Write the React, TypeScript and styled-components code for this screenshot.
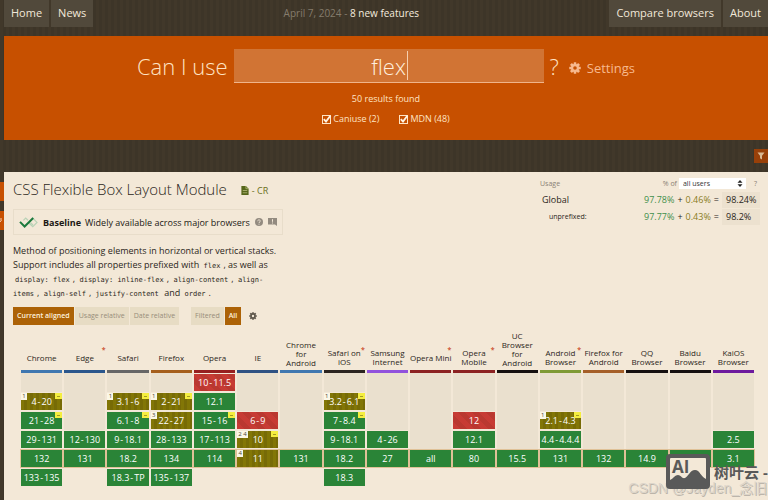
import React from "react";
import styled, { createGlobalStyle, css } from "styled-components";

const GlobalStyle = createGlobalStyle`
  *, *::before, *::after { box-sizing: border-box; }
  html { background: #40372a; }
  body {
    margin: 0;
    font-family: "Open Sans", "Noto Sans", sans-serif;
    color: #2b2620;
  }
  button, input, select { font-family: inherit; margin: 0; border: 0; border-radius: 0; }
`;

const Page = styled.div`
  position: relative;
  display: flex;
  flex-direction: column;
  min-height: 100vh;
  padding-left: 4px;
  overflow: hidden;
  background: repeating-linear-gradient(90deg, #41382a 0 3px, #3d3528 3px 6px);
`;

/* ---------- top navigation ---------- */

const TopBar = styled.header`
  display: flex;
  justify-content: space-between;
  align-items: flex-start;
  height: 36px;
`;

const NavGroup = styled.nav`
  display: flex;
  gap: 2px;
`;

const NavLink = styled.a`
  padding: 0 7px;
  height: 27px;
  line-height: 26px;
  font-size: 11px;
  color: #f1e8da;
  background: #51493b;
  text-decoration: none;
  white-space: nowrap;
`;

const NewsLine = styled.p`
  margin: 0;
  line-height: 26px;
  font-size: 10px;
  color: #857c6c;
  white-space: nowrap;
`;

const NewsLink = styled.a`
  color: #f5ecde;
  text-decoration: none;
`;

/* ---------- search ---------- */

const SearchPanel = styled.form`
  display: flex;
  flex-direction: column;
  align-items: center;
  height: 104px;
  padding-top: 13px;
  background: #c75000;
  color: #ffe4c4;
`;

const SearchRow = styled.div`
  display: flex;
  align-items: center;
  height: 34px;
`;

const SearchLabel = styled.label`
  font-size: 22px;
  font-weight: 300;
  line-height: 34px;
  margin-right: 6px;
  white-space: nowrap;
`;

const SearchField = styled.div`
  position: relative;
  width: 310px;
  height: 34px;
`;

const SearchInput = styled.input`
  width: 100%;
  height: 34px;
  padding: 0;
  background: #d17434;
  border-bottom: 1px solid #f0b48a;
  color: #fff0de;
  font-size: 22px;
  font-weight: 300;
  text-align: center;
  outline: none;
  caret-color: transparent;
`;

const Caret = styled.span`
  position: absolute;
  top: 2px;
  left: calc(50% + 18px);
  width: 1px;
  height: 29px;
  background: #f6cfae;
`;

const QuestionMark = styled.span`
  margin: 0 10px 0 6px;
  font-size: 22px;
  font-weight: 300;
  line-height: 34px;
`;

const SettingsButton = styled.button`
  display: flex;
  align-items: center;
  gap: 6px;
  padding: 4px 0 0;
  background: none;
  color: #f7b98e;
  font-size: 13px;
  line-height: 20px;
`;

const ResultCount = styled.p`
  margin: 9px 0 0;
  font-size: 9px;
  line-height: 14px;
`;

const FilterRow = styled.div`
  display: flex;
  gap: 20px;
  margin-top: 6px;
`;

const CheckLabel = styled.label`
  display: flex;
  align-items: center;
  gap: 2px;
  font-size: 9px;
  line-height: 14px;
`;

const CheckBox = styled.span`
  position: relative;
  display: block;
  width: 9px;
  height: 9px;
  input {
    display: block;
    appearance: none;
    width: 9px;
    height: 9px;
    border: 1px solid #ffe4c4;
  }
  svg {
    position: absolute;
    inset: 0;
    overflow: visible;
    pointer-events: none;
  }
`;

/* ---------- strip between search and card ---------- */

const Strip = styled.div`
  display: flex;
  justify-content: flex-end;
  height: 32px;
  padding-top: 9px;
`;

const FilterButton = styled.button`
  display: flex;
  align-items: center;
  justify-content: center;
  width: 14px;
  height: 14px;
  padding: 0;
  background: #984009;
`;

/* ---------- feature card ---------- */

const Card = styled.main`
  position: relative;
  flex: 1;
  padding: 6px 8px 0 9px;
  background: #f3e8d7;
`;

const SideTabs = styled.div`
  position: absolute;
  top: 10px;
  left: -4px;
  display: grid;
  gap: 10px;
`;

const SideTab = styled.button`
  display: flex;
  align-items: center;
  width: 4px;
  height: 19px;
  padding: 0;
  background: #c75000;
`;

const CardHead = styled.div`
  display: flex;
  justify-content: space-between;
  align-items: flex-start;
`;

const Summary = styled.section`
  width: 272px;
`;

const TitleRow = styled.div`
  display: flex;
  align-items: center;
  height: 22px;
  white-space: nowrap;
`;

const Title = styled.h1`
  margin: 0 14px 0 0;
  font-size: 15px;
  font-weight: 300;
  line-height: 22px;
`;

const StatusLink = styled.a`
  display: flex;
  align-items: center;
  gap: 3px;
  padding-top: 2px;
  color: #6b7020;
  font-size: 9px;
  text-decoration: none;
`;

const Baseline = styled.div`
  display: inline-flex;
  align-items: center;
  height: 26px;
  margin-top: 9px;
  padding: 0 5px;
  border: 1px solid #e8ddca;
  font-size: 9px;
  color: #1b1814;
  white-space: nowrap;
  b { margin: 0 4px 0 5px; }
`;

const HintButton = styled.button`
  display: flex;
  margin-left: 5px;
  padding: 0;
  background: none;
  color: #938b80;
`;

const Description = styled.p`
  margin: 9px 0 0;
  font-size: 9px;
  line-height: 14px;
`;

const Code = styled.code`
  padding: 0 3px 0 2px;
  font-family: "DejaVu Sans Mono", "Liberation Mono", monospace;
  font-size: 7px;
  line-height: 7px;
`;

/* ---------- usage ---------- */

const Usage = styled.table`
  width: 220px;
  border-collapse: collapse;
  font-size: 9px;
  line-height: 11px;
  white-space: nowrap;
  th, td { padding: 0; font-weight: 400; text-align: left; }
`;

const UsageLabel = styled.th<{ $size: "head" | "main" | "sub" }>`
  && {
    font-size: ${(p) => (p.$size === "main" ? 9 : 7)}px;
    padding-left: ${(p) => (p.$size === "head" ? 0 : p.$size === "main" ? 2 : 9)}px;
    color: ${(p) => (p.$size === "head" ? "#8a8174" : "#2b2620")};
  }
`;

const UsageRow = styled.tr`
  height: 17px;
  &:first-child { height: 13px; vertical-align: top; }
`;

const UsageTools = styled.div`
  display: flex;
  align-items: center;
  justify-content: flex-end;
  gap: 2px;
  padding-right: 3px;
  font-size: 7px;
  color: #8a8174;
`;

const SelectBox = styled.span`
  position: relative;
  display: flex;
  width: 67px;
  margin-right: 6px;
  select {
    width: 100%;
    height: 11px;
    padding: 0 4px;
    appearance: none;
    background: #fff;
    color: #333;
    font-size: 7px;
    line-height: 11px;
  }
  svg { position: absolute; right: 3px; top: 2px; pointer-events: none; }
`;

const Figures = styled.div`
  display: flex;
  align-items: center;
  justify-content: flex-end;
  gap: 3px;
`;

const Share = styled.span<{ $tone: "full" | "partial" }>`
  color: ${(p) => (p.$tone === "full" ? "#3f8f4c" : "#8a7c1c")};
`;

const Total = styled.span`
  width: 38px;
  padding: 0 4px;
  line-height: 16px;
  background: #ece1cf;
  color: #2b2620;
`;

/* ---------- view switches ---------- */

const Switches = styled.div`
  display: flex;
  align-items: center;
  margin-top: 7px;
`;

const SwitchGroup = styled.div`
  display: flex;
  gap: 1px;
  margin-right: 12px;
`;

const SwitchButton = styled.button<{ $active?: boolean }>`
  height: 18px;
  padding: 0 4px;
  font-size: 7px;
  line-height: 18px;
  white-space: nowrap;
  ${(p) =>
    p.$active
      ? css`background: #ac6206; color: #fff3df; font-weight: 600;`
      : css`background: #e7dcc4; color: #978d7a;`}
`;

const GearButton = styled.button`
  display: flex;
  padding: 0;
  margin-left: -4px;
  background: none;
  color: #5d564b;
`;

/* ---------- support table ---------- */

const Support = styled.table`
  width: calc(100% - 12px);
  margin: 6px 5px 0 7px;
  table-layout: fixed;
  border-collapse: separate;
  border-spacing: 0;
  font-size: 9px;
  text-align: center;
  th, td { padding: 0; font-weight: 400; }
  th { vertical-align: bottom; font-size: 8px; }
`;

const BrowserName = styled.div<{ $bar: string }>`
  position: relative;
  display: flex;
  align-items: center;
  justify-content: center;
  min-height: 26px;
  margin: 0 1px;
  padding-bottom: 3px;
  border-bottom: 3px solid ${(p) => p.$bar};
  line-height: 9px;
`;

const Star = styled.sup`
  position: absolute;
  top: -2px;
  right: 0;
  color: #cf5b3b;
  font-size: 7px;
  font-weight: 700;
  line-height: 9px;
`;

type Kind = "y" | "a" | "n";

const fills: Record<Kind, string> = {
  y: "#2a8437",
  a: "repeating-linear-gradient(90deg, #827606 0 3px, #776b06 3px 6px)",
  n: "repeating-linear-gradient(45deg, #c73b34 0 5px, #ba3830 5px 10px)",
};

const Row = styled.tr<{ $current?: boolean }>`
  td { background: ${(p) => (p.$current ? "#dfc197" : "transparent")}; }
`;

const Version = styled.div<{ $kind: Kind }>`
  position: relative;
  height: 17px;
  margin: 1px;
  background: ${(p) => fills[p.$kind]};
  color: #fff;
  line-height: 17px;
  white-space: nowrap;
`;

const Dash = styled.span`
  margin: 0 1px;
`;

const Empty = styled.div<{ $blank?: boolean }>`
  height: 19px;
  margin: 0 1px;
  background: ${(p) => (p.$blank ? "transparent" : "#eae0ce")};
`;

const NoteTag = styled.span`
  position: absolute;
  top: 0;
  left: 0;
  min-width: 6px;
  height: 7px;
  padding: 0 1px;
  background: #fbf7e6;
  color: #4b4636;
  font-size: 6px;
  line-height: 7px;
`;

const PrefixTag = styled.span`
  position: absolute;
  top: 0;
  right: 0;
  display: flex;
  align-items: center;
  justify-content: center;
  width: 7px;
  height: 6px;
  background: #f4ee3f;
  &::after { content: ""; width: 3px; height: 1px; background: #a39a25; }
`;

/* ---------- watermark ---------- */

const Watermark = styled.div`
  position: absolute;
  right: 0;
  bottom: 0;
  width: 139px;
  height: 48px;
  pointer-events: none;
  font-family: "Open Sans", "Noto Sans CJK SC", sans-serif;
`;

const Signature = styled.span`
  position: absolute;
  right: 1px;
  bottom: 2px;
  color: #dcd5ca;
  font-family: "Liberation Sans", "Noto Sans CJK SC", sans-serif;
  font-size: 14px;
  line-height: 20px;
  text-shadow: 1px 1px 0 #bcb5aa;
  white-space: nowrap;
`;

const Stamp = styled.div`
  position: absolute;
  left: 37px;
  top: 2px;
  display: flex;
  align-items: center;
  gap: 4px;
  color: #595959;
  font-size: 15px;
  font-weight: 700;
  line-height: 20px;
  white-space: nowrap;
`;

/* ---------- icons ---------- */

const Gear = ({ size, hole }: { size: number; hole: string }) => (
  <svg width={size} height={size} viewBox="-12 -12 24 24" aria-hidden="true">
    {[0, 45, 90, 135].map((a) => (
      <rect key={a} x="-2.6" y="-11.5" width="5.2" height="23" rx="0.8" fill="currentColor" transform={`rotate(${a})`} />
    ))}
    <circle r="8" fill="currentColor" />
    <circle r="3.6" fill={hole} />
  </svg>
);

const Check = () => (
  <svg width="9" height="9" viewBox="0 0 9 9" aria-hidden="true">
    <path d="M1.8 4.2 4 6.6 8.4 0.8" fill="none" stroke="#fff3e2" strokeWidth="1.9" />
  </svg>
);

const BaselineIcon = () => (
  <svg width="19" height="11" viewBox="0 0 19 11" aria-hidden="true">
    <path d="M4.4 3.4 6.7 1 9 3.2 M11.5 5.6 14 8 M12 2.8 13.8 1 18 5.4 13.8 9.7 9.6 5.7" fill="none" stroke="#b9d2b6" strokeWidth="1.2" />
    <path d="M1 4.9 5.6 9.5 14.2 1" fill="none" stroke="#1d7a3d" strokeWidth="2" />
  </svg>
);

/* ---------- data ---------- */

const browsers: { name: string; bar: string; star?: boolean }[] = [
  { name: "Chrome", bar: "#3f77b0" },
  { name: "Edge", bar: "#2a568c", star: true },
  { name: "Safari", bar: "#666666" },
  { name: "Firefox", bar: "#a55f1c" },
  { name: "Opera", bar: "#961f1f" },
  { name: "IE", bar: "#2f5283" },
  { name: "Chrome for Android", bar: "#3f77b0" },
  { name: "Safari on iOS", bar: "#2b2420", star: true },
  { name: "Samsung Internet", bar: "#9152dc" },
  { name: "Opera\u00a0Mini", bar: "#8c2222", star: true },
  { name: "Opera Mobile", bar: "#8c2222", star: true },
  { name: "UC Browser for Android", bar: "#151010" },
  { name: "Android Browser", bar: "#7f9a35", star: true },
  { name: "Firefox\u00a0for Android", bar: "#a55f28" },
  { name: "QQ Browser", bar: "#151010" },
  { name: "Baidu Browser", bar: "#151010" },
  { name: "KaiOS Browser", bar: "#6d1a9e" },
];

type Cell = { v: string; kind?: Kind; note?: string; prefix?: boolean } | null;
const y = (v: string, prefix = false): Cell => ({ v, kind: "y", prefix });
const a = (v: string, note: string, prefix = false): Cell => ({ v, kind: "a", note, prefix });
const n = (v: string): Cell => ({ v, kind: "n" });
const _ = null;

const rows: Cell[][] = [
  [_, _, _, _, n("10-11.5"), _, _, _, _, _, _, _, _, _, _, _, _],
  [a("4-20", "1", true), _, a("3.1-6", "1", true), a("2-21", "1", true), y("12.1"), _, _, a("3.2-6.1", "1", true), _, _, _, _, _, _, _, _, _],
  [y("21-28", true), _, y("6.1-8", true), a("22-27", "3"), y("15-16", true), n("6-9"), _, y("7-8.4", true), _, _, n("12"), _, a("2.1-4.3", "1", true), _, _, _, _],
  [y("29-131"), y("12-130"), y("9-18.1"), y("28-133"), y("17-113"), a("10", "2 4", true), _, y("9-18.1"), y("4-26"), _, y("12.1"), _, y("4.4-4.4.4"), _, _, _, y("2.5")],
  [y("132"), y("131"), y("18.2"), y("134"), y("114"), a("11", "4"), y("131"), y("18.2"), y("27"), y("all"), y("80"), y("15.5"), y("131"), y("132"), y("14.9"), y("13.52"), y("3.1")],
  [y("133-135"), _, y("18.3-TP"), y("135-137"), _, _, _, y("18.3"), _, _, _, _, _, _, _, _, _],
];
const CURRENT = 4;

const Range = ({ value }: { value: string }) => {
  const [from, to] = value.split("-");
  return to ? <>{from}<Dash>-</Dash>{to}</> : <>{from}</>;
};

export default function App() {
  return (
    <Page>
      <GlobalStyle />
      <TopBar>
        <NavGroup>
          <NavLink href="#home">Home</NavLink>
          <NavLink href="#news">News</NavLink>
        </NavGroup>
        <NewsLine>
          April 7, 2024 - <NewsLink href="#new">8 new features</NewsLink>
        </NewsLine>
        <NavGroup>
          <NavLink href="#compare">Compare browsers</NavLink>
          <NavLink href="#about">About</NavLink>
        </NavGroup>
      </TopBar>

      <SearchPanel onSubmit={(e) => e.preventDefault()}>
        <SearchRow>
          <SearchLabel htmlFor="search">Can I use</SearchLabel>
          <SearchField>
            <SearchInput id="search" type="text" defaultValue="flex" autoComplete="off" />
            <Caret />
          </SearchField>
          <QuestionMark>?</QuestionMark>
          <SettingsButton type="button">
            <Gear size={12} hole="#c75000" />
            Settings
          </SettingsButton>
        </SearchRow>
        <ResultCount>50 results found</ResultCount>
        <FilterRow>
          <CheckLabel>
            <CheckBox><input type="checkbox" defaultChecked /><Check /></CheckBox>
            Caniuse (2)
          </CheckLabel>
          <CheckLabel>
            <CheckBox><input type="checkbox" defaultChecked /><Check /></CheckBox>
            MDN (48)
          </CheckLabel>
        </FilterRow>
      </SearchPanel>

      <Strip>
        <FilterButton aria-label="Filter">
          <svg width="8" height="8" viewBox="0 0 8 8" aria-hidden="true">
            <path d="M0.5 0.5h7L5 3.8V7.5L3 6.3V3.8Z" fill="#d9b892" />
          </svg>
        </FilterButton>
      </Strip>

      <Card>
        <SideTabs>
          <SideTab aria-label="Previous panel" />
          <SideTab aria-label="Next panel">
            <svg width="3" height="5" viewBox="0 0 3 5" aria-hidden="true">
              <path d="M0 1h2M0 4 1.5 2" stroke="#f6cfae" fill="none" />
            </svg>
          </SideTab>
        </SideTabs>

        <CardHead>
          <Summary>
            <TitleRow>
              <Title>CSS Flexible Box Layout Module</Title>
              <StatusLink href="#spec">
                <svg width="8" height="9" viewBox="0 0 8 10" aria-hidden="true">
                  <path d="M0 0h5l3 3v7H0Z" fill="#55661a" />
                  <path d="M5 0v3h3M1.5 5h5M1.5 7.5h5" fill="none" stroke="#b3b878" strokeWidth="0.9" />
                </svg>
                - CR
              </StatusLink>
            </TitleRow>
            <Baseline>
              <BaselineIcon />
              <b>Baseline</b>
              Widely available across major browsers
              <HintButton aria-label="About Baseline">
                <svg width="8" height="8" viewBox="0 0 8 8" aria-hidden="true">
                  <circle cx="4" cy="4" r="4" fill="currentColor" />
                  <path d="M2.7 3.2C2.7 1.4 5.4 1.5 5.3 3.1 5.2 3.9 4 3.9 4 5M4 5.7v1" fill="none" stroke="#f3e8d7" strokeWidth="0.9" />
                </svg>
              </HintButton>
              <HintButton aria-label="Feedback">
                <svg width="9" height="8" viewBox="0 0 9 8" aria-hidden="true">
                  <path d="M0 0h9v8L7 6.5H0Z" fill="currentColor" />
                  <path d="M4.5 1.2v2.6M4.5 4.5v1" stroke="#f3e8d7" strokeWidth="1" />
                </svg>
              </HintButton>
            </Baseline>
            <Description>
              Method of positioning elements in horizontal or vertical stacks.
              Support includes all properties prefixed with <Code>flex</Code>, as well as{" "}
              <Code>display: flex</Code>, <Code>display: inline-flex</Code>, <Code>align-content</Code>,{" "}
              <Code>align-items</Code>, <Code>align-self</Code>, <Code>justify-content</Code> and{" "}
              <Code>order</Code>.
            </Description>
          </Summary>

          <Usage>
            <tbody>
              <UsageRow>
                <UsageLabel $size="head" scope="row">Usage</UsageLabel>
                <td>
                  <UsageTools>
                    <label htmlFor="scope">% of</label>
                    <SelectBox>
                      <select id="scope" defaultValue="all">
                        <option value="all">all users</option>
                      </select>
                      <svg width="6" height="7" viewBox="0 0 6 7" aria-hidden="true">
                        <path d="M0.5 2.8 3 0l2.5 2.8ZM0.5 4.2 3 7l2.5-2.8Z" fill="#222" />
                      </svg>
                    </SelectBox>
                    ?
                  </UsageTools>
                </td>
              </UsageRow>
              <UsageRow>
                <UsageLabel $size="main" scope="row">Global</UsageLabel>
                <td>
                  <Figures>
                    <Share $tone="full">97.78%</Share>+<Share $tone="partial">0.46%</Share>=
                    <Total>98.24%</Total>
                  </Figures>
                </td>
              </UsageRow>
              <UsageRow>
                <UsageLabel $size="sub" scope="row">unprefixed:</UsageLabel>
                <td>
                  <Figures>
                    <Share $tone="full">97.77%</Share>+<Share $tone="partial">0.43%</Share>=
                    <Total>98.2%</Total>
                  </Figures>
                </td>
              </UsageRow>
            </tbody>
          </Usage>
        </CardHead>

        <Switches>
          <SwitchGroup>
            <SwitchButton $active>Current aligned</SwitchButton>
            <SwitchButton>Usage relative</SwitchButton>
            <SwitchButton>Date relative</SwitchButton>
          </SwitchGroup>
          <SwitchGroup>
            <SwitchButton>Filtered</SwitchButton>
            <SwitchButton $active>All</SwitchButton>
          </SwitchGroup>
          <GearButton aria-label="Table settings">
            <Gear size={8} hole="#f3e8d7" />
          </GearButton>
        </Switches>

        <Support>
          <thead>
            <tr>
              {browsers.map((b) => (
                <th key={b.name} scope="col">
                  <BrowserName $bar={b.bar}>
                    {b.name}
                    {b.star && <Star>*</Star>}
                  </BrowserName>
                </th>
              ))}
            </tr>
          </thead>
          <tbody>
            {rows.map((cells, r) => (
              <Row key={r} $current={r === CURRENT}>
                {cells.map((cell, c) => (
                  <td key={c}>
                    {cell ? (
                      <Version $kind={cell.kind ?? "y"}>
                        <Range value={cell.v} />
                        {cell.note && <NoteTag>{cell.note}</NoteTag>}
                        {cell.prefix && <PrefixTag />}
                      </Version>
                    ) : (
                      <Empty $blank={r > CURRENT} />
                    )}
                  </td>
                ))}
              </Row>
            ))}
          </tbody>
        </Support>
      </Card>

      <Watermark>
        <Signature>CSDN @Jayden_念旧</Signature>
        <Stamp>
          <svg width="44" height="35" viewBox="0 0 44 35" aria-hidden="true">
            <rect width="44" height="35" rx="4" fill="#595959" />
            <rect x="4" y="4" width="36" height="27" rx="1" fill="#f3e8d7" />
            <path d="M4 26C8 24 9 21 12 21s4 4 7 3 5-8 10-8 5 6 11 9v7H4Z" fill="#595959" />
            <text x="6" y="19" fontSize="17" fontWeight="700" fill="#595959">AI</text>
          </svg>
          树叶云 -
        </Stamp>
      </Watermark>
    </Page>
  );
}
